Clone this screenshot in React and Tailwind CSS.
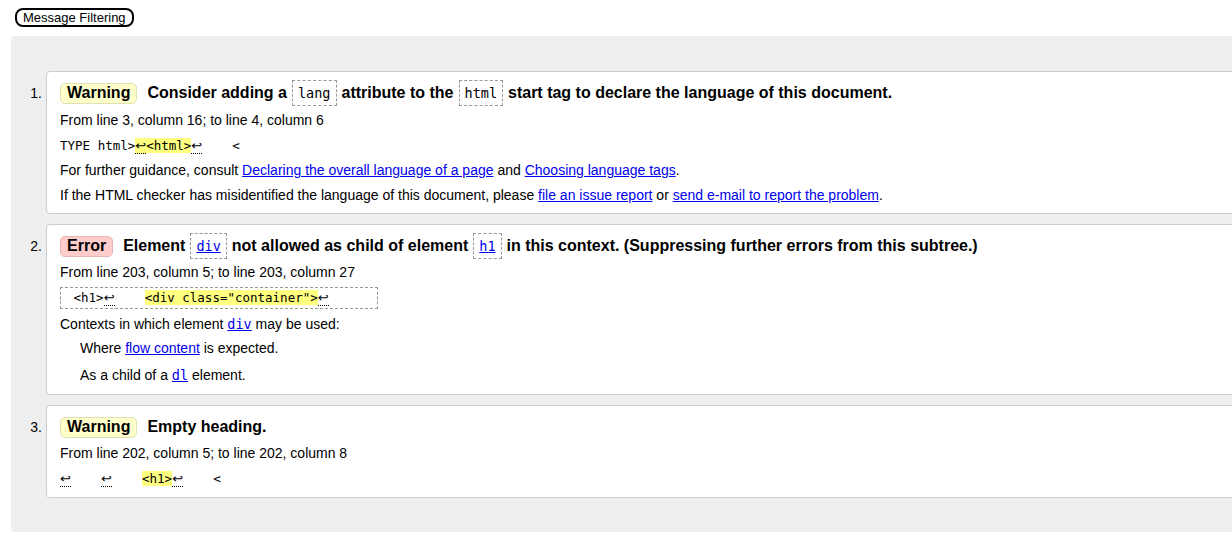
const sans = { fontFamily: '"Liberation Sans", Arial, sans-serif' };
const mono = "font-['DejaVu_Sans_Mono',monospace]";

function Chip({ children, link }) {
  return (
    <span className={`mx-[5px] inline-flex h-[26px] items-center border border-dashed border-[#999] px-[5px] align-middle text-[13.5px] font-normal ${mono}`}>
      {link ? <a href="#" className="text-[#0000ee] underline">{children}</a> : children}
    </span>
  );
}

function Badge({ kind }) {
  const cls =
    kind === 'Error'
      ? 'bg-[#ffcccc] border-[#e8b4b4]'
      : 'bg-[#ffffcc] border-[#e0e0b0]';
  return (
    <span className={`mr-[10px] inline-flex h-[21px] items-center rounded-[5px] border px-[6px] ${cls}`}>
      {kind}
    </span>
  );
}

function Nl({ hl }) {
  return (
    <span
      className={`border-b border-dotted border-black font-['DejaVu_Sans',sans-serif] text-[13px] ${hl ? 'bg-[#ffff80]' : ''}`}
    >
      ↩
    </span>
  );
}

function Hl({ children }) {
  return <span className="bg-[#ffff80]">{children}</span>;
}

function Code({ children }) {
  return (
    <div className="flex h-[25px] items-center">
      <span className={`whitespace-pre text-[12.5px] ${mono}`}>{children}</span>
    </div>
  );
}

function Line({ children, className = '' }) {
  return <div className={`flex h-[25px] items-center ${className}`}>{children}</div>;
}

function A({ children, code }) {
  return (
    <a href="#" className={`text-[#0000ee] underline ${code ? `${mono} text-[13.5px]` : ''}`}>
      {children}
    </a>
  );
}

function Item({ n, children, badge, title, gap = 'mt-[1px]' }) {
  return (
    <li className="flex">
      <div className="w-[35px] shrink-0 pr-[4px] pt-[9px] text-right text-[14px] leading-[26px]">{n}.</div>
      <div className="flex-1 rounded-[4px] border border-[#cccccc] bg-white px-[13px] pb-[6px] pt-[8px]">
        <div className="flex h-[26px] items-center whitespace-nowrap text-[16px] font-bold">
          <Badge kind={badge} />
          {title}
        </div>
        <div className={`${gap} text-[14px]`}>{children}</div>
      </div>
    </li>
  );
}

export default function App() {
  return (
    <div className="h-[536px] w-[1232px] overflow-hidden bg-white text-black" style={sans}>
      <div className="pl-[15px] pt-[8px]">
        <button className="flex h-[19px] items-center rounded-[8px] border-2 border-black px-[6px] text-[13px] leading-none">
          Message Filtering
        </button>
      </div>

      <div className="ml-[11px] mt-[9px] w-[1300px] rounded-[4px] bg-[#eeeeee] pb-[34px] pt-[35px]">
        <ol className="flex flex-col gap-[10px]">
          <Item
            n={1}
            badge="Warning"
            gap="mt-[2px] -mb-[1px]"
            title={
              <>
                Consider adding a<Chip>lang</Chip>attribute to the<Chip>html</Chip>start tag to declare the language
                of this document.
              </>
            }
          >
            <Line>From line 3, column 16; to line 4, column 6</Line>
            <Code>
              TYPE html&gt;<Nl hl /><Hl>&lt;html&gt;</Hl><Nl />{'    '}&lt;
            </Code>
            <Line>
              For further guidance, consult&nbsp;<A>Declaring the overall language of a page</A>&nbsp;and&nbsp;
              <A>Choosing language tags</A>.
            </Line>
            <Line>
              If the HTML checker has misidentified the language of this document, please&nbsp;<A>file an issue report</A>
              &nbsp;or&nbsp;<A>send e-mail to report the problem</A>.
            </Line>
          </Item>

          <Item
            n={2}
            badge="Error"
            title={
              <>
                Element<Chip link>div</Chip>not allowed as child of element<Chip link>h1</Chip>in this context.
                (Suppressing further errors from this subtree.)
              </>
            }
          >
            <Line>From line 203, column 5; to line 203, column 27</Line>
            <div className="mt-[2px] flex">
              <div className="flex h-[22px] w-[318px] items-center border border-dashed border-[#999] pl-[5px]">
                <span className={`whitespace-pre text-[12.5px] ${mono}`}>
                  {' '}&lt;h1&gt;<Nl />{'    '}<Hl>&lt;div class="container"&gt;</Hl><Nl />
                </span>
              </div>
            </div>
            <dl className="mt-[3px]">
              <dt className="flex h-[25px] items-center">
                Contexts in which element&nbsp;<A code>div</A>&nbsp;may be used:
              </dt>
              <dd className="ml-[20px] flex h-[22px] items-center">
                Where&nbsp;<A>flow content</A>&nbsp;is expected.
              </dd>
              <dd className="ml-[20px] mt-[4px] flex h-[25px] items-center">
                As a child of a&nbsp;<A code>dl</A>&nbsp;element.
              </dd>
            </dl>
          </Item>

          <Item n={3} badge="Warning" title="Empty heading.">
            <Line>From line 202, column 5; to line 202, column 8</Line>
            <Code>
              <Nl />{'    '}<Nl />{'    '}<Hl>&lt;h1&gt;</Hl><Nl />{'    '}&lt;
            </Code>
          </Item>
        </ol>
      </div>
    </div>
  );
}
